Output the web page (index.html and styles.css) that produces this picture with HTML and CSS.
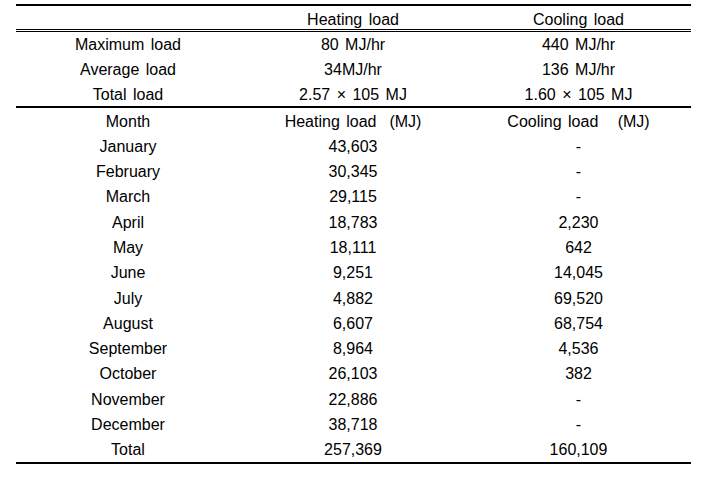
FILE: index.html
```html
<!DOCTYPE html>
<html>
<head>
<meta charset="utf-8">
<link rel="stylesheet" href="styles.css">
</head>
<body>
<div class="table">
  <div class="row head"><div></div><div>Heating load</div><div>Cooling load</div></div>
  <div class="group summary">
    <div class="row"><div>Maximum load</div><div>80 MJ/hr</div><div>440 MJ/hr</div></div>
    <div class="row"><div>Average load</div><div>34MJ/hr</div><div>136 MJ/hr</div></div>
    <div class="row"><div>Total load</div><div>2.57 × 105 MJ</div><div>1.60 × 105 MJ</div></div>
  </div>
  <div class="group monthly">
    <div class="row"><div>Month</div><div>Heating load&nbsp; (MJ)</div><div>Cooling load &nbsp; (MJ)</div></div>
    <div class="row"><div>January</div><div>43,603</div><div>-</div></div>
    <div class="row"><div>February</div><div>30,345</div><div>-</div></div>
    <div class="row"><div>March</div><div>29,115</div><div>-</div></div>
    <div class="row"><div>April</div><div>18,783</div><div>2,230</div></div>
    <div class="row"><div>May</div><div>18,111</div><div>642</div></div>
    <div class="row"><div>June</div><div>9,251</div><div>14,045</div></div>
    <div class="row"><div>July</div><div>4,882</div><div>69,520</div></div>
    <div class="row"><div>August</div><div>6,607</div><div>68,754</div></div>
    <div class="row"><div>September</div><div>8,964</div><div>4,536</div></div>
    <div class="row"><div>October</div><div>26,103</div><div>382</div></div>
    <div class="row"><div>November</div><div>22,886</div><div>-</div></div>
    <div class="row"><div>December</div><div>38,718</div><div>-</div></div>
    <div class="row"><div>Total</div><div>257,369</div><div>160,109</div></div>
  </div>
</div>
</body>
</html>
```
FILE: styles.css
```css
html, body {
  margin: 0;
  padding: 0;
  background: #fff;
}
body {
  font-family: "Liberation Sans", Arial, sans-serif;
  font-size: 16px;
  color: #000;
}
.table {
  margin: 4px 0 0 16px;
  width: 675px;
  border-top: 2px solid #000;
  border-bottom: 2px solid #000;
}
.row {
  display: grid;
  grid-template-columns: 224px 226px 225px;
  align-items: center;
  text-align: center;
  line-height: 18px;
  word-spacing: 2px;
  box-sizing: border-box;
  padding-top: 2px;
}
.head {
  height: 26px;
  padding-top: 4px;
  border-bottom: 3px double #000;
}
.summary {
  border-bottom: 2px solid #000;
}
.summary .row {
  height: 24.67px;
}
.monthly .row {
  height: 25.29px;
}
```
